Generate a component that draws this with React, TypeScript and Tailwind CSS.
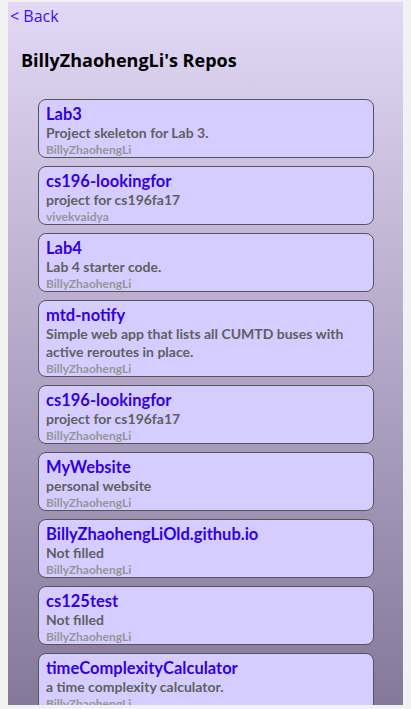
import React from "react";

const repos = [
  { name: "Lab3", desc: "Project skeleton for Lab 3.", owner: "BillyZhaohengLi" },
  { name: "cs196-lookingfor", desc: "project for cs196fa17", owner: "vivekvaidya" },
  { name: "Lab4", desc: "Lab 4 starter code.", owner: "BillyZhaohengLi" },
  { name: "mtd-notify", desc: "Simple web app that lists all CUMTD buses with active reroutes in place.", owner: "BillyZhaohengLi" },
  { name: "cs196-lookingfor", desc: "project for cs196fa17", owner: "BillyZhaohengLi" },
  { name: "MyWebsite", desc: "personal website", owner: "BillyZhaohengLi" },
  { name: "BillyZhaohengLiOld.github.io", desc: "Not filled", owner: "BillyZhaohengLi" },
  { name: "cs125test", desc: "Not filled", owner: "BillyZhaohengLi" },
  { name: "timeComplexityCalculator", desc: "a time complexity calculator.", owner: "BillyZhaohengLi" },
];

export default function App() {
  return (
    <div className="w-[411px] h-[709px] bg-[#f2f2f2] pt-[2px] px-[8px] overflow-hidden" style={{ fontFamily: "'Open Sans', 'Noto Sans', sans-serif" }}>
      <div className="h-[703px] overflow-hidden bg-gradient-to-b from-[#e2d9f6] to-[#857999] pl-[2px]">
        <div className="pt-[4px] text-[16px] leading-[20px] text-[#3a10f0]">&lt; Back</div>
        <h1 className="mt-[22px] ml-[11px] text-[18px] leading-[24px] font-bold text-black">BillyZhaohengLi's Repos</h1>
        <div className="mt-[27px] ml-[28px] mr-[29px] flex flex-col gap-[8px]" style={{ fontFamily: "Lato, 'Open Sans', sans-serif" }}>
          {repos.map((r, i) => (
            <div key={i} className="border border-[#555] rounded-[8px] bg-[#d5cdff] pl-[7px] pr-[7px] pt-[4px] pb-0">
              <div className="text-[16.5px] leading-[20px] font-bold text-[#3300e0]">{r.name}</div>
              <div className="text-[14px] leading-[18px] font-bold text-[#606060]">{r.desc}</div>
              <div className="text-[12px] leading-[15px] font-bold text-[#959595]">{r.owner}</div>
            </div>
          ))}
        </div>
      </div>
    </div>
  );
}
